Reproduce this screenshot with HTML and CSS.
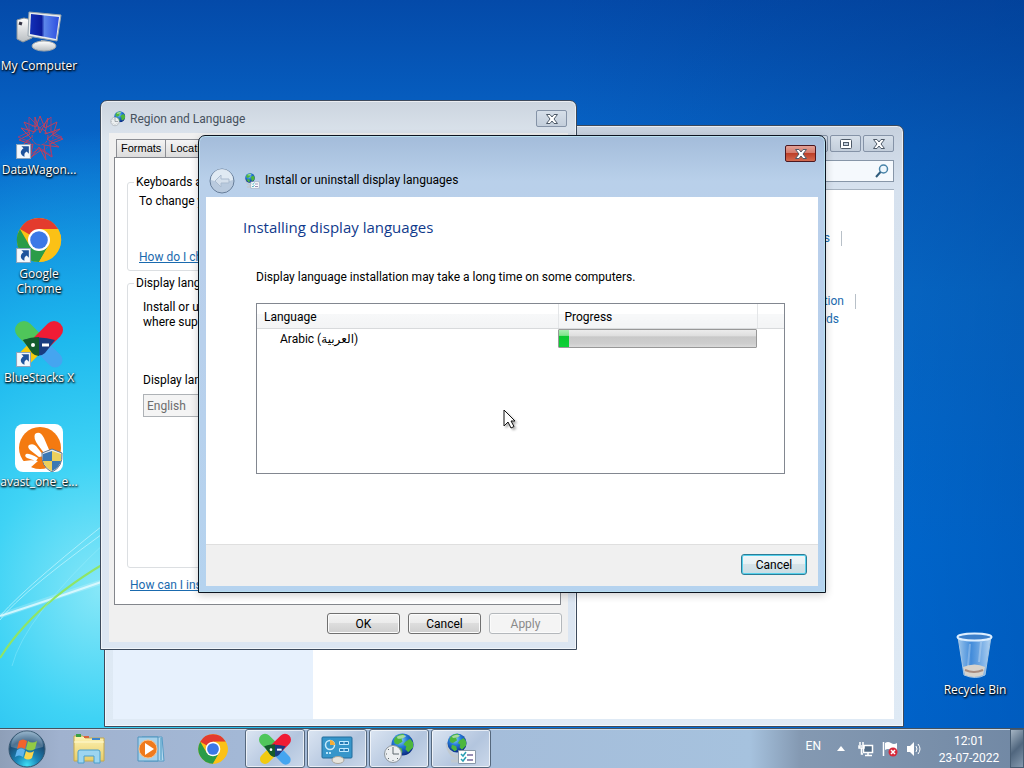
FILE: index.html
```html
<!DOCTYPE html>
<html lang="en">
<head>
<meta charset="utf-8">
<title>Install or uninstall display languages</title>
<link rel="stylesheet" href="styles.css">
</head>
<body>
<svg class="defs" aria-hidden="true">
  <defs>
    <radialGradient id="g-globe" cx="40%" cy="30%" r="70%"><stop offset="0" stop-color="#8fd6f8"/><stop offset=".45" stop-color="#2478d6"/><stop offset="1" stop-color="#0a2c86"/></radialGradient>
    <linearGradient id="g-screen" x1="0" y1="0" x2="1" y2="0"><stop offset="0" stop-color="#1230b8"/><stop offset=".4" stop-color="#0a1c9c"/><stop offset=".5" stop-color="#5c86ea"/><stop offset="1" stop-color="#2c4ee0"/></linearGradient>
    <linearGradient id="g-metal" x1="0" y1="0" x2="0" y2="1"><stop offset="0" stop-color="#fff"/><stop offset="1" stop-color="#b9bec2"/></linearGradient>
    <radialGradient id="g-orb" cx="50%" cy="95%" r="90%"><stop offset="0" stop-color="#3fe0f5"/><stop offset=".35" stop-color="#1a86b8"/><stop offset=".75" stop-color="#1b4a72"/><stop offset="1" stop-color="#6d95b4"/></radialGradient>
    <linearGradient id="g-folder" x1="0" y1="0" x2="0" y2="1"><stop offset="0" stop-color="#fdf3b4"/><stop offset="1" stop-color="#e8cc68"/></linearGradient>
    <linearGradient id="g-bin" x1="0" y1="0" x2="1" y2="0"><stop offset="0" stop-color="#c5dff5" stop-opacity=".8"/><stop offset=".4" stop-color="#5f9fe4" stop-opacity=".7"/><stop offset="1" stop-color="#d3e8fa" stop-opacity=".85"/></linearGradient>
    <symbol id="chrome" viewBox="0 0 48 48">
      <circle cx="24" cy="24" r="22" fill="#fbc116"/>
      <path d="M24 24 4.900 13A22 22 0 0 1 43.100 13H24z" fill="#e33b2e"/>
      <path d="M4.900 13A22 22 0 0 0 24 46l9.500-16.500L24 24 14.500 29.500z" fill="#2a9c48"/>
      <path d="M24 13h19.100A22 22 0 0 1 24 46l9.500-16.500z" fill="#fbc116"/>
      <circle cx="24" cy="24" r="11" fill="#fff"/><circle cx="24" cy="24" r="8.800" fill="#3b78e7"/>
    </symbol>
    <symbol id="bluestacks" viewBox="0 0 48 48">
      <path d="M32 32l8 8" stroke="#45a5f0" stroke-width="15" stroke-linecap="round"/>
      <path d="M24 24 9 39" stroke="#f2ca10" stroke-width="15" stroke-linecap="round"/>
      <path d="M9 10l15 15" stroke="#4fc65a" stroke-width="18" stroke-linecap="round"/>
      <path d="M39 10 25 24" stroke="#f01c34" stroke-width="18" stroke-linecap="round"/>
      <path d="M8 20q16-5 32 0L30 33q-6 5-12 0z" fill="#183c80"/>
      <path d="M8 20q8-3 16-3v19q-4 0-7-3z" fill="#145c2c"/>
      <circle cx="18" cy="25" r="2" fill="#fff"/><path d="M27 25h7" stroke="#fff" stroke-width="3"/>
    </symbol>
    <symbol id="shortcut" viewBox="0 0 14 14">
      <path d="M.5.500h13v13H.5z" fill="#f4f8fc" stroke="#8ca4bc"/>
      <path d="M5 2h7v7L10 7C8 8 7.500 9.500 8 12 3.500 10 3.500 6.500 7 4z" fill="#1f549c"/>
    </symbol>
    <symbol id="globe" viewBox="0 0 24 24">
      <circle cx="12" cy="12" r="11.500" fill="url(#g-globe)"/>
      <path d="M4 5q4-4 9-4l2 3-4 2 1 3-5 3-3-1-1-3zM15 9l5-3 3 4v5l-5 5-3-3 1-3-3-2zM6 14l5 2 1 4-3 2-4-4z" fill="#4db73c"/>
      <path d="M6 4q5-3 10-1-3 3-9 3z" fill="#fff" opacity=".5"/>
    </symbol>
    <symbol id="region" viewBox="0 0 32 32">
      <use href="#globe" x="8" width="23" height="23"/>
      <circle cx="10" cy="21" r="8.500" fill="#eceff1" stroke="#8e979e"/>
      <path d="M10 14v7h6M10 27v1M3 21h1M5 16l1 1M15 26l-1-1M5 26l1-1" stroke="#5e686f" fill="none"/>
    </symbol>
    <symbol id="langpack" viewBox="0 0 32 32">
      <path d="M2 10Q4 25 16 24M12 24v4M6 28h12" fill="none" stroke="#c1c9cf" stroke-width="3"/>
      <use href="#globe" x="2" width="20" height="20"/>
      <path d="M13.500 17.500h17v13h-17z" fill="#fff" stroke="#8898a8"/>
      <path d="M16 21l2 2 3-4M16 26l2 2 3-4" fill="none" stroke="#2a9fb4" stroke-width="1.500"/><path d="M22 22h6M22 27h6" stroke="#75699c" stroke-width="1.500"/>
    </symbol>
    <symbol id="cross" viewBox="0 0 14 12"><path d="M1.500 1.500h3.500l2 2.500 2-2.500h3.500L9 6l3.500 4.500H9L7 8l-2 2.500H1.500L5 6z" fill="#fff" stroke="#4e5a68"/></symbol>
  </defs>
</svg>

<main class="desktop">
  <svg class="wallpaper" viewBox="0 0 160 200" preserveAspectRatio="xMinYMax slice" aria-hidden="true">
    <path d="M0 88Q50 70 140 42" fill="none" stroke="#fff" stroke-width="5" opacity=".2"/>
    <path d="M0 88Q50 72 130 44" fill="none" stroke="#e6fbff" stroke-width="2" opacity=".8"/>
    <path d="M0 88Q30 54 130-24M0 92Q20 64 130-14" fill="none" stroke="#d6faff" opacity=".6"/>
    <path d="M0 130Q40 66 140 16" fill="none" stroke="#8fe565" stroke-width="2"/>
    <path d="M12 138Q24 90 110 10" fill="none" stroke="#b2f4ff" opacity=".3"/>
  </svg>

  <ul class="icons">
    <li class="icon">
      <svg viewBox="0 0 48 48" aria-hidden="true">
        <path d="M2 12l7-2 8 2v18l-9 4-6-3z" fill="url(#g-metal)" stroke="#8d969c"/><path d="M4 15l3 1" stroke="#334" stroke-width="3"/>
        <path d="M14 4l32 3-4 26-29-5z" fill="#e9edef" stroke="#99a5ae"/><path d="M16 6l28 3-3 22-26-5z" fill="url(#g-screen)"/>
        <path d="M26 32l7 1-1 6h-7z" fill="#b4babd"/><ellipse cx="29" cy="38" rx="12" ry="5" fill="url(#g-metal)" stroke="#a1a8ac"/>
      </svg><span>My Computer</span>
    </li>
    <li class="icon">
      <svg viewBox="0 0 48 48" aria-hidden="true">
        <g fill="none" stroke-width="1" stroke="#c0405c"><circle cx="25" cy="25" r="8" stroke-dasharray="3 1"/><circle cx="25" cy="25" r="13" stroke-dasharray="2 2" stroke="#8c4088"/>
        <path d="M25 4l5 12 12-6-4 13 10 4-13 5 2 13-11-7-11 8 1-14-12-4 11-6-6-12 12 5z"/>
        <path d="M14 5l11 11L36 5v15l11 5-13 5 3 14-12-8-12 8 2-14-12-5 11-5z" stroke="#94407c"/>
        <path d="M20 5l5 16 8-15-3 16 15-5-13 10 12 8-15-2 2 15-7-13-9 12 3-15-14 4 12-10L6 16l14 4z" stroke="#c0405c"/></g>
        <use href="#shortcut" x="1" y="32" width="15" height="15"/>
      </svg><span>DataWagon...</span>
    </li>
    <li class="icon">
      <svg viewBox="0 0 48 48" aria-hidden="true"><use href="#chrome" width="48" height="48"/><use href="#shortcut" x="1" y="32" width="15" height="15"/></svg><span>Google Chrome</span>
    </li>
    <li class="icon">
      <svg viewBox="0 0 48 48" aria-hidden="true"><use href="#bluestacks" width="48" height="48"/><use href="#shortcut" x="1" y="32" width="15" height="15"/></svg><span>BlueStacks X</span>
    </li>
    <li class="icon">
      <svg viewBox="0 0 48 48" aria-hidden="true">
        <rect width="48" height="48" rx="8" fill="#fff"/><circle cx="25" cy="24" r="21" fill="#f47a10"/>
        <path d="M20 10q5-4 9 4l6 14-3 5-9-12q-5-7-3-11zM14 21q4-2 7 1l8 10-5 1-9-7q-3-3-1-5zM11 30q3-1 12 4l-2 3-9-3q-3-2-1-4zM3 39q9-4 20-2l-8 7q-6 0-12-5z" fill="#fff"/>
        <path d="M37 25l10 4q1 14-10 19-11-5-10-19z" fill="#e9edf1" stroke="#60758a"/>
        <path d="M37 27v10h-9v-7zM37 37h9q-2 7-9 10z" fill="#3a78b4"/><path d="M37 27l9 3v7h-9zM28 37h9v10q-7-3-9-10z" fill="#ecd05c"/>
      </svg><span>avast_one_e...</span>
    </li>
  </ul>

  <div class="icon bin">
    <svg viewBox="0 0 48 48" aria-hidden="true">
      <path d="M7 5l6 38q12 5 21 0l6-38z" fill="url(#g-bin)" stroke="#a3c5e4"/><path d="M12 35q12-5 22 0l-2 8q-9 4-18 0z" fill="#d7d3cc"/><path d="M14 38q9 4 18 0" stroke="#a78c80" fill="none" stroke-width="2"/>
      <ellipse cx="23.500" cy="5" rx="17" ry="3.500" fill="#3c7fca" stroke="#dceeff" stroke-width="2"/><path d="M19 12l-2 22M30 10l-2 20" stroke="#fff" opacity=".25" stroke-width="2"/>
    </svg><span>Recycle Bin</span>
  </div>

  <section class="window explorer" aria-label="Control Panel">
    <div class="captions">
      <button class="cap" aria-label="Minimize"></button>
      <button class="cap" aria-label="Restore"><svg width="12" height="10" viewBox="0 0 12 10"><rect x=".5" y=".5" width="11" height="9" rx="1" fill="#fff" stroke="#4e5a68"/><rect x="3.500" y="3.500" width="5" height="3" fill="#c6d2df" stroke="#4e5a68"/></svg></button>
      <button class="cap" aria-label="Close"><svg width="14" height="12"><use href="#cross"/></svg></button>
    </div>
    <div class="searchrow"><label class="search"><input type="text" aria-label="Search Control Panel"><svg width="14" height="14" viewBox="0 0 14 14"><circle cx="8.500" cy="5" r="4" fill="#eef7fd" stroke="#4883a8" stroke-width="1.500"/><path d="M5.500 8 1 13" stroke="#2f5c7c" stroke-width="2"/></svg></label></div>
    <div class="explorer-body">
      <nav class="side" aria-label="Control Panel Home"></nav>
      <div class="tasks">
        <p class="task first"><a href="#">Change time zones</a></p>
        <p class="task second"><a href="#">Change location</a></p>
        <p class="task third"><a href="#">Change keyboards</a></p>
      </div>
    </div>
  </section>

  <section class="window region" aria-label="Region and Language">
    <header class="titlebar"><svg width="16" height="16"><use href="#region"/></svg><h2>Region and Language</h2><button class="cap" aria-label="Close"><svg width="14" height="12"><use href="#cross"/></svg></button></header>
    <div class="region-body">
      <div class="tabs" role="tablist"><button class="tab" role="tab">Formats</button><button class="tab" role="tab">Location</button></div>
      <div class="panel">
        <fieldset class="keyboards"><legend>Keyboards and</legend>
          <p>To change your</p><a href="#">How do I change</a></fieldset>
        <fieldset class="display"><legend>Display language</legend>
          <p>Install or uninstall<br>where supported</p>
          <label for="lang">Display language</label><select id="lang" disabled><option>English</option></select></fieldset>
        <p class="more"><a href="#">How can I install</a></p>
      </div>
      <footer class="actions"><button class="btn">OK</button><button class="btn">Cancel</button><button class="btn" disabled>Apply</button></footer>
    </div>
  </section>

  <section class="window wizard" role="dialog" aria-labelledby="wt">
    <div class="captions"><button class="cap red" aria-label="Close"><svg width="14" height="12"><use href="#cross"/></svg></button></div>
    <header class="wizard-title">
      <button class="back" disabled aria-label="Back"><svg width="26" height="26" viewBox="0 0 26 26"><circle cx="13" cy="13" r="12" fill="#b9cade" stroke="#687f9b"/><path d="M2 12a11 11 0 0 1 22 0q-11 4-22 0z" fill="#eef4fa" opacity=".75"/><path d="M6 13l6-6v4h8v4h-8v4z" fill="#d5e0ec" stroke="#aabbcf"/></svg></button>
      <svg width="16" height="16"><use href="#langpack"/></svg><h2 id="wt">Install or uninstall display languages</h2>
    </header>
    <div class="wizard-page">
      <div class="wizard-content">
        <h1>Installing display languages</h1>
        <p>Display language installation may take a long time on some computers.</p>
        <div class="list">
          <table>
            <thead><tr><th class="c-lang">Language</th><th class="c-prog">Progress</th><th></th></tr></thead>
            <tbody><tr><td class="name">Arabic (<span lang="ar">العربية</span>)</td><td class="bar"><progress value="5" max="100" aria-label="Arabic"></progress></td><td></td></tr></tbody>
          </table>
        </div>
      </div>
      <footer class="wizard-foot"><button class="btn hot">Cancel</button></footer>
    </div>
  </section>

  <svg class="cursor" width="14" height="22" viewBox="0 0 14 22" aria-hidden="true"><path d="M1 1v16l4-4 3 6 3-1.500-3-5.500h4z" fill="#fff" stroke="#111"/></svg>
</main>

<footer class="taskbar">
  <button class="item start" aria-label="Start"><svg width="38" height="38" viewBox="0 0 38 38">
    <circle cx="19" cy="19" r="18" fill="url(#g-orb)" stroke="#35566f"/><path d="M3 17a16 16 0 0 1 32 0q-16 5-32 0z" fill="#fff" opacity=".22"/>
    <path d="M11 11q4-3 8 0l-2 8q-4-3-8 0z" fill="#f2642c"/><path d="M20 11q4 3 9 0l-2 8q-5 3-9 0z" fill="#92ca45"/><path d="M9 20q4-3 8 0l-2 7q-4-3-8 0z" fill="#60b4ee"/><path d="M18 21q4 3 8 0l-2 7q-4 3-8 0z" fill="#fbd54c"/></svg></button>
  <button class="item" aria-label="File Explorer"><svg width="32" height="32" viewBox="0 0 32 32"><path d="M1 3h9l2 2h19v23H1z" fill="url(#g-folder)" stroke="#c4a84c"/><path d="M3 1h5v3H3z" fill="#38a044"/><path d="M11 3h5v2h-5z" fill="#d8603c"/><path d="M19 5h8v2h-8z" fill="#3f85cc"/><path d="M1 9h30" stroke="#fff9d0"/><path d="M5 30V19q0-2 2-2h18q2 0 2 2v11h-6v-7H11v7z" fill="#9dd5f0" stroke="#4a9fcc"/></svg></button>
  <button class="item" aria-label="Media Player"><svg width="28" height="28" viewBox="0 0 28 28"><path d="M5 2h20l2 24H7z" fill="#b4d9ee" stroke="#569cc6"/><path d="M1 2h20v24H1z" fill="#a7d1ea" stroke="#4f94be"/><path d="M24 3v22" stroke="#3f92bf"/><circle cx="11" cy="14" r="9" fill="#ef7a1c" stroke="#fac088"/><path d="M8 8l9 6-9 6z" fill="#fff"/></svg></button>
  <button class="item" aria-label="Chrome"><svg width="32" height="32"><use href="#chrome"/></svg></button>
  <button class="item open" aria-label="BlueStacks"><svg width="32" height="32"><use href="#bluestacks"/></svg></button>
  <button class="item open" aria-label="Control Panel"><svg width="32" height="30" viewBox="0 0 32 30"><rect x="1" y="3" width="30" height="21" rx="1" fill="#3796ca" stroke="#226c9c"/><circle cx="9" cy="11" r="4.500" fill="none" stroke="#c7eafa" stroke-width="1.500"/><path d="M9 11V6a5 5 0 0 1 5 5z" fill="#f5ad38"/><path d="M18.500 7.500h9v3h-9zM18.500 14.500h9v3h-9zM23 7v4M23 14v4" fill="#2579b4" stroke="#c2eaff"/><path d="M5 19h6" stroke="#b9e5fa" stroke-dasharray="2 1" stroke-width="2"/><ellipse cx="17" cy="26" rx="6" ry="3.500" fill="#e7e4dc" stroke="#a9a59b"/></svg></button>
  <button class="item open" aria-label="Region and Language"><svg width="32" height="32"><use href="#region"/></svg></button>
  <button class="item open" aria-label="Display languages"><svg width="32" height="32"><use href="#langpack"/></svg></button>
  <div class="tray">
    <span class="lang">EN</span>
    <svg class="chevron" width="8" height="5" viewBox="0 0 8 5"><path d="M0 5l4-5 4 5z" fill="#fff"/></svg>
    <svg width="16" height="16" viewBox="0 0 16 16"><path d="M5.500 4.500h9v7h-9z" fill="#526b85" stroke="#fff" stroke-width="1.500"/><path d="M7 14.500h7M10 12v2M2 1v3M5 1v3M1 5h5v2H1zM3.500 7v6H5" fill="none" stroke="#fff" stroke-width="1.500"/></svg>
    <svg width="16" height="16" viewBox="0 0 16 16"><path d="M1.500 1v14" stroke="#fff" stroke-width="1.500"/><path d="M3 2q3-2 6 0t6 0v7q-3 2-6 0T3 9z" fill="#fff"/><circle cx="11" cy="11" r="4.500" fill="#d8293a"/><path d="M9 9l4 4M13 9l-4 4" stroke="#fff" stroke-width="1.500"/></svg>
    <svg width="16" height="16" viewBox="0 0 16 16"><path d="M1 5h3l4-4v14l-4-4H1z" fill="#fff"/><path d="M10 5q2 3 0 6M12 3q4 5 0 10" fill="none" stroke="#fff"/></svg>
    <time class="clock"><span>12:01</span><span>23-07-2022</span></time>
    <button class="peek" aria-label="Show desktop"></button>
  </div>
</footer>
</body>
</html>
```
FILE: styles.css
```css
* { box-sizing: border-box; }
body {
  margin: 0;
  height: 100vh;
  overflow: hidden;
  display: flex;
  flex-direction: column;
  font: 12px/15px Roboto, "Open Sans", "DejaVu Sans", sans-serif;
  color: #000;
}
h1, h2, p, ul, fieldset { margin: 0; padding: 0; }
button, input, select { font: inherit; color: inherit; padding: 0; }
svg { flex: none; }
a { color: #1a6aae; }
.defs { position: absolute; width: 0; height: 0; }

.desktop {
  position: relative;
  flex: 1;
  min-height: 0;
  overflow: hidden;
  background:
    radial-gradient(ellipse 400px 460px at 100px 590px, #86e7f8 0%, #3fd3f5 28%, #1eb9ee 55%, rgba(12, 145, 228, 0) 100%),
    linear-gradient(to right, rgba(0, 40, 120, 0) 55%, rgba(0, 55, 135, .4) 100%),
    linear-gradient(to bottom, #044aa9 0%, #0765c8 20%, #0876d8 40%, #0078e6 75%, #0074e4 100%);
}
.wallpaper { position: absolute; left: 0; bottom: 0; width: 160px; height: 200px; overflow: visible; }

.icons { position: relative; list-style: none; width: 78px; padding-top: 8px; display: grid; grid-auto-rows: 104px; }
.icon {
  display: flex;
  flex-direction: column;
  align-items: center;
  gap: 2px;
  width: 78px;
  text-align: center;
  color: #fff;
  font-family: "Open Sans", "DejaVu Sans", sans-serif;
  text-shadow: 0 1px 2px #000, 1px 1px 2px #000;
}
.icon svg { width: 48px; height: 48px; }
.bin { position: absolute; right: 10px; bottom: 31px; }

.window {
  position: absolute;
  display: flex;
  flex-direction: column;
  border: 1px solid #3d4a5c;
  border-radius: 7px 7px 0 0;
  box-shadow: inset 0 0 0 1px rgba(255, 255, 255, .6);
}
.captions { display: flex; justify-content: flex-end; gap: 2px; }
.cap {
  width: 31px;
  height: 17px;
  display: grid;
  place-items: center;
  border: 1px solid #8593a7;
  border-radius: 2px;
  background: linear-gradient(#d6dfe9, #c3cedb);
}

.explorer { left: 104px; right: 120px; top: 125px; bottom: 1px; padding: 9px 9px 7px 8px; background: linear-gradient(#c7d1de 0, #d6e1ee 60px, #dfeaf5 100%); }
.searchrow { display: flex; justify-content: flex-end; padding: 8px 0 7px; }
.search { display: flex; align-items: center; width: 200px; height: 22px; padding-right: 4px; background: #f5f9fd; border: 1px solid #8796a8; }
.search input { flex: 1; min-width: 0; border: 0; background: none; }
.explorer-body { flex: 1; display: flex; background: #fff; border-top: 1px solid #a6b2c0; }
.side { width: 200px; background: #e7f1fd; }
.tasks { flex: 1; padding-top: 41px; }
.task { display: flex; justify-content: flex-end; height: 15px; }
.task a { text-decoration: none; }
.first { margin-bottom: 48px; padding-right: 52px; }
.first a, .second a { padding-right: 11px; border-right: 1px solid #b8c0c8; }
.second { padding-right: 38px; margin-bottom: 3px; }
.third { padding-right: 55px; }

.region { left: 100px; top: 100px; width: 477px; height: 550px; padding: 0 8px 7px; background: linear-gradient(#ccd5df 0, #dde5ee 40px, #dce6f2 100%); }
.titlebar { display: flex; align-items: center; gap: 4px; height: 32px; padding: 3px 1px 0 1px; color: #47525e; }
.titlebar h2 { flex: 1; padding-top: 1px; font-size: 12px; font-weight: 400; }
.region-body { flex: 1; display: flex; flex-direction: column; padding: 6px 7px 8px 5px; background: #f0f0f0; }
.tabs { display: flex; padding-left: 2px; }
.tab { height: 18px; padding: 0 4px; border: 1px solid #8c8e94; border-bottom: 0; background: linear-gradient(#f4f4f4, #dcdcdc); font-family: "Liberation Sans", sans-serif; font-size: 11px; }
.tab + .tab { border-left: 0; }
.panel { flex: 1; display: flex; flex-direction: column; align-items: stretch; border: 1px solid #83868c; background: #fff; padding: 17px 12px 0; white-space: nowrap; }
.panel fieldset { border: 1px solid #dcdfe2; border-radius: 3px; min-width: 0; overflow: hidden; }
.panel legend { padding: 0 2px; }
.keyboards { height: 96px; padding: 4px 11px; }
.keyboards legend { margin-left: -5px; }
.keyboards p { margin-bottom: 41px; }
.display { height: 292px; margin-top: 5px; padding: 9px 15px; }
.display legend { margin-left: -9px; }
.display p { margin-bottom: 43px; }
.display label { display: block; margin-bottom: 6px; }
.display select { width: 260px; height: 23px; padding: 1px 0 0 3px; appearance: none; border: 1px solid #aeb2b6; background: #f4f4f4; color: #6d6d6d; opacity: 1; }
.more { margin: 10px 3px 0; }
.actions { display: flex; justify-content: flex-end; gap: 8px; padding-top: 8px; margin-right: -1px; }
.btn {
  width: 73px;
  height: 21px;
  padding-top: 1px;
  border: 1px solid #707070;
  border-radius: 3px;
  background: linear-gradient(#f3f3f3 0, #ebebeb 49%, #dddddd 50%, #cfcfcf 100%);
  box-shadow: inset 0 0 0 1px #fbfbfb;
}
.btn:disabled { color: #8a8a8a; border-color: #b4b8bc; background: #f4f4f4; }

.wizard {
  left: 198px;
  top: 135px;
  width: 628px;
  height: 458px;
  padding: 9px 7px 6px;
  border-color: #0c1420;
  background: linear-gradient(#a3bcda 0, #b9d0ea 45px, #b9cfeb 120px, #b5d3ef 100%);
  box-shadow: inset 0 0 0 1px #b9dff0, 0 2px 8px rgba(0, 0, 0, .2);
}
.wizard .captions { padding-right: 2px; }
.red { border-color: #4c1820; background: linear-gradient(#e3a196 0, #d4796a 48%, #bd4029 50%, #d36a50 100%); }
.wizard-title { display: flex; align-items: center; gap: 5px; height: 35px; padding: 2px 0 0 3px; }
.wizard-title h2 { font-size: 12px; font-weight: 400; }
.back { border: 0; background: none; display: flex; margin-right: 4px; }
.wizard-page { flex: 1; display: flex; flex-direction: column; background: #fff; }
.wizard-content { flex: 1; padding: 19px 33px 0 37px; }
h1 { font: 400 15px/22px "Open Sans", sans-serif; color: #103a8c; }
.wizard-content p { margin: 32px 0 18px 13px; }
.list { height: 171px; margin-left: 13px; border: 1px solid #828790; }
.list table { width: 100%; border-collapse: collapse; table-layout: fixed; }
th { height: 24px; padding: 4px 0 0 7px; text-align: left; font-weight: 400; border-bottom: 1px solid #d8dadc; border-right: 1px solid #e4e6e8; background: linear-gradient(#fff 0, #fff 40%, #f7f8f9 41%, #f3f4f5 100%); }
th:last-child { border-right: 0; }
.c-lang { width: 301px; }
.c-prog { width: 199px; }
th.c-prog { padding-left: 6px; }
td { height: 21px; padding: 0; }
.name { padding: 2px 0 0 23px; }
.name span { font-family: "DejaVu Sans", sans-serif; }
.bar { vertical-align: middle; }
progress { display: block; width: 199px; height: 19px; appearance: none; border: 1px solid #989898; border-radius: 1px; }
progress::-webkit-progress-bar { background: linear-gradient(#ececec 0, #dedede 35%, #c8c8c8 40%, #cecece 80%, #dadada 100%); }
progress::-webkit-progress-value { background: linear-gradient(#a8efb0 0, #7ee48a 32%, #08c82c 36%, #10d038 100%); }
.wizard-foot { display: flex; justify-content: flex-end; padding: 9px 11px 11px; border-top: 1px solid #dfdfdf; background: #f0f0f0; }
.hot { width: 66px; border-color: #2c7c96; box-shadow: inset 0 0 0 1px #55d0ec; background: linear-gradient(#f1f6f8 0, #e6f0f3 49%, #d5e3e8 50%, #cadde4 100%); }

.cursor { position: absolute; left: 503px; top: 409px; filter: drop-shadow(2px 2px 1px rgba(0, 0, 0, .3)); }

.taskbar {
  display: flex;
  gap: 2px;
  height: 40px;
  border-top: 1px solid #45525f;
  box-shadow: inset 0 1px 0 #c9d9e8;
  background: linear-gradient(to right, #8e9fb8 0, #a0b2cf 60px, #a3b8d6 240px, #a6c2de 750px, #8499b2 800px, #7188a4 100%);
}
.item { width: 60px; display: grid; place-items: center; border: 0; background: none; }
.start { width: 57px; padding-right: 4px; }
.open { border: 1px solid #56687d; border-radius: 3px; background: linear-gradient(135deg, #dbe5f2, #b3c5de 60%, #cbd8ea); box-shadow: inset 0 0 0 1px rgba(255, 255, 255, .65); }
.tray { margin-left: auto; display: flex; align-items: center; gap: 8px; color: #fff; }
.lang { margin-right: 8px; padding-bottom: 4px; }
.chevron { margin-right: 5px; }
.clock { display: flex; flex-direction: column; align-items: center; gap: 2px; width: 72px; padding: 2px 0 0 6px; }
.peek { align-self: stretch; width: 14px; border: 1px solid #485d73; background: linear-gradient(135deg, #a5b5c4, #50667e 50%, #8599ae); }
```
